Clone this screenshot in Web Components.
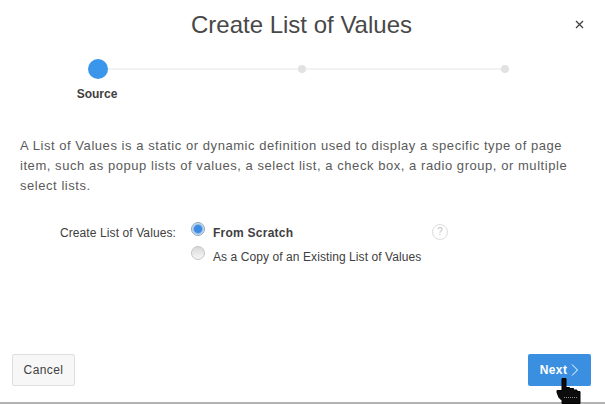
<!DOCTYPE html>
<html>
<head>
<meta charset="utf-8">
<style>
  html, body { margin: 0; padding: 0; background: #fff; }
  body { font-family: "Liberation Sans", Arial, sans-serif; color: #404040; }
</style>
</head>
<body>
<lov-dialog>
  <lov-header slot="header" label="Create List of Values"></lov-header>
  <lov-steps slot="steps" label="Source"></lov-steps>
  <p-text slot="body">A List of Values is a static or dynamic definition used to display a specific type of page item, such as popup lists of values, a select list, a check box, a radio group, or multiple select lists.</p-text>
  <lov-field slot="body" label="Create List of Values:">
    <lov-radio checked>From Scratch</lov-radio>
    <lov-radio>As a Copy of an Existing List of Values</lov-radio>
  </lov-field>
  <lov-button slot="cancel">Cancel</lov-button>
  <lov-button slot="next" hot>Next</lov-button>
</lov-dialog>

<script>
class LovDialog extends HTMLElement {
  constructor() {
    super();
    this.attachShadow({ mode: 'open' }).innerHTML = `
    <style>
      :host {
        display: flex;
        flex-direction: column;
        position: relative;
        width: 605px;
        height: 404px;
        box-sizing: border-box;
        border-bottom: 2px solid #b3b3b3;
      }
      main { flex: 1; padding: 0 20px; }
      footer {
        display: flex;
        justify-content: space-between;
        padding: 0 14px 16px 12px;
      }
      svg { position: absolute; left: 556px; top: 377px; }
    </style>
    <slot name="header"></slot>
    <slot name="steps"></slot>
    <main><slot name="body"></slot></main>
    <footer><slot name="cancel"></slot><slot name="next"></slot></footer>
    <svg width="28" height="27" viewBox="0 0 28 27">
      <path d="M6 1.500h4v9h3.500v1h4v1.500h3.500v1.500h3v12H6v-3l-3-3-2-5v-2h5z" fill="#0c0c0c" stroke="#000"/>
      <path d="M8 20.500h14" stroke="#8a8a8a" stroke-dasharray="1 1"/>
    </svg>`;
  }
}

class LovHeader extends HTMLElement {
  constructor() {
    super();
    this.attachShadow({ mode: 'open' }).innerHTML = `
    <style>
      :host {
        display: flex;
        justify-content: center;
        align-items: center;
        position: relative;
        height: 50px;
        padding-right: 2px;
        font-size: 24px;
        color: #484848;
      }
      svg { position: absolute; right: 21px; top: 20px; }
    </style>
    <span>${this.getAttribute('label')}</span>
    <svg width="9" height="9" viewBox="0 0 9 9">
      <path d="M1 1l7 7M8 1L1 8" stroke="#404040" stroke-width="1.300" fill="none"/>
    </svg>`;
  }
}

class LovSteps extends HTMLElement {
  constructor() {
    super();
    this.attachShadow({ mode: 'open' }).innerHTML = `
    <style>
      :host { display: block; height: 75px; padding-top: 9px; box-sizing: border-box; }
      .track {
        display: grid;
        grid-template-columns: 210px 203px 8px;
        align-items: center;
        height: 20px;
        margin-left: 88px;
        width: 421px;
        background: linear-gradient(#f2f2f2, #f2f2f2) center / 100% 2px no-repeat;
      }
      .cur { width: 20px; height: 20px; border-radius: 50%; background: #3a96ea; }
      .dot { width: 8px; height: 8px; border-radius: 50%; background: #e2e2e2; }
      .label {
        width: 80px;
        margin: 8px 0 0 57px;
        text-align: center;
        font-size: 12px;
        font-weight: bold;
        color: #404040;
      }
    </style>
    <div class="track"><span class="cur"></span><span class="dot"></span><span class="dot"></span></div>
    <div class="label">${this.getAttribute('label')}</div>`;
  }
}

class PText extends HTMLElement {
  constructor() {
    super();
    this.attachShadow({ mode: 'open' }).innerHTML = `
    <style>
      :host {
        display: block;
        margin-top: 11px;
        font-size: 13px;
        line-height: 20px;
        letter-spacing: 0.55px;
        color: #5a5a5a;
      }
    </style>
    <slot></slot>`;
  }
}

class LovField extends HTMLElement {
  constructor() {
    super();
    this.attachShadow({ mode: 'open' }).innerHTML = `
    <style>
      :host {
        display: grid;
        grid-template-columns: 156px 1fr 24px;
        margin: 26px 129px 0 0;
        font-size: 12px;
        color: #404040;
      }
      label { text-align: right; padding-top: 1px; height: 20px; line-height: 20px; letter-spacing: 0.1px; }
      .opts { display: flex; flex-direction: column; gap: 4px; padding-left: 15px; }
      .help {
        width: 14px; height: 14px;
        border: 1px solid #ddd;
        border-radius: 50%;
        text-align: center;
        line-height: 14px;
        font-size: 10px;
        color: #c4c4c4;
        margin-top: 2px;
      }
    </style>
    <label>${this.getAttribute('label')}</label>
    <div class="opts"><slot></slot></div>
    <span class="help">?</span>`;
  }
}

class LovRadio extends HTMLElement {
  constructor() {
    super();
    const on = this.hasAttribute('checked');
    this.attachShadow({ mode: 'open' }).innerHTML = `
    <style>
      :host {
        display: flex;
        align-items: center;
        gap: 8px;
        height: 20px;
        font-weight: ${on ? 'bold' : 'normal'};
        letter-spacing: ${on ? 0.25 : 0.08}px;
      }
      span { padding-top: 2px; }
      i {
        width: 14px; height: 14px;
        border-radius: 50%;
        box-sizing: border-box;
        border: 1px solid ${on ? '#8aa6c4' : '#c4c4c4'};
        background: ${on
          ? 'radial-gradient(circle at 50% 50%, #3a8ae6 0 3.500px, #8fb8e6 4.500px, #e3e6ea 6px)'
          : 'linear-gradient(#d9d9d9, #f7f7f7)'};
        margin-top: -6px;
      }
    </style>
    <i></i><span><slot></slot></span>`;
  }
}

class LovButton extends HTMLElement {
  constructor() {
    super();
    const hot = this.hasAttribute('hot');
    this.attachShadow({ mode: 'open' }).innerHTML = `
    <style>
      :host {
        display: flex;
        align-items: center;
        justify-content: center;
        gap: 4px;
        height: 32px;
        width: 63px;
        box-sizing: border-box;
        border-radius: 2px;
        font-size: 12px;
        letter-spacing: 0.4px;
        ${hot
          ? 'background: #3a8fe0; color: #fff; font-weight: bold;'
          : 'background: #f7f7f7; color: #404040; border: 1px solid #dfdfdf;'}
      }
    </style>
    <span><slot></slot></span>
    ${hot ? '<svg width="8" height="12" viewBox="0 0 8 12"><path d="M1 .5l5.500 5.500-5.500 5.500" stroke="#fff" fill="none"/></svg>' : ''}`;
  }
}

customElements.define('lov-dialog', LovDialog);
customElements.define('lov-header', LovHeader);
customElements.define('lov-steps', LovSteps);
customElements.define('p-text', PText);
customElements.define('lov-field', LovField);
customElements.define('lov-radio', LovRadio);
customElements.define('lov-button', LovButton);
</script>
</body>
</html>
